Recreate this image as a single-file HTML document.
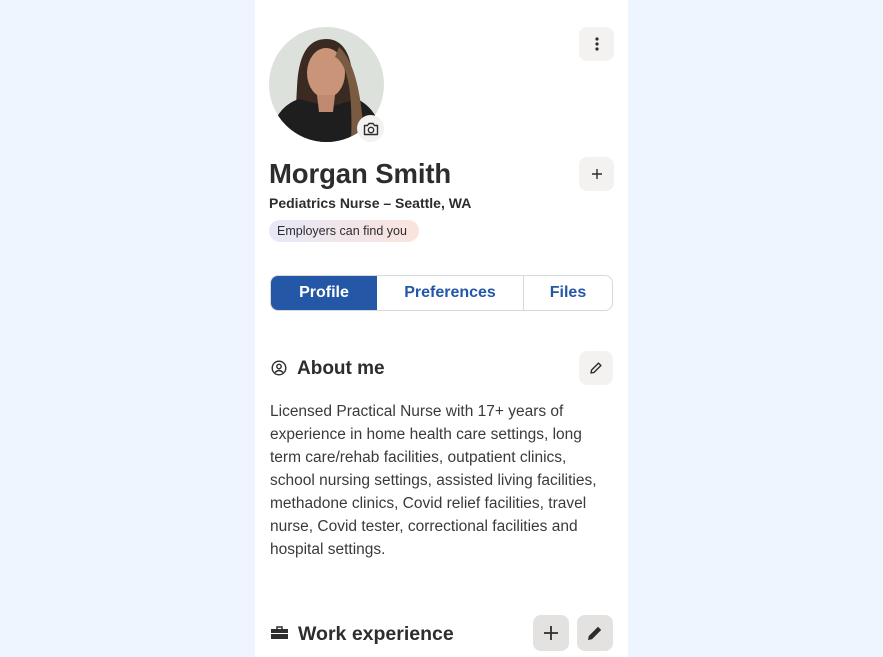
<!DOCTYPE html>
<html><head><style>
*{margin:0;padding:0;box-sizing:border-box}
body{width:883px;height:657px;background:#eef5fe;font-family:"Liberation Sans",sans-serif;color:#2d2d2d;overflow:hidden;position:relative}
.panel{position:absolute;left:255px;top:0;width:373px;height:657px;background:#fff}
.a{position:absolute}
.btn{position:absolute;background:#f3f2f1;border-radius:8px;display:flex;align-items:center;justify-content:center}
</style></head><body>
<div class="panel"></div>
<div class="a" style="left:269px;top:27px;width:115px;height:115px;border-radius:50%;background:#dde1dc;overflow:hidden">
<svg width="115" height="115" viewBox="0 0 115 115">
<path d="M25 115 L28 60 Q30 12 57 12 Q82 12 84 55 L95 115Z" fill="#3a2a22"/>
<path d="M0 115 Q5 80 30 72 L60 80 L88 72 Q110 82 115 115Z" fill="#1e1e1e"/>
<ellipse cx="57" cy="46" rx="19" ry="25" fill="#c99478"/>
<path d="M48 68 L66 68 L64 85 L50 85Z" fill="#c08a70"/>
<path d="M66 30 Q85 40 82 115 L95 115 Q92 40 70 20Z" fill="#7a5a40"/>
</svg></div>
<div class="a" style="left:357px;top:115px;width:27px;height:27px;border-radius:50%;background:#f3f2f1;display:flex;align-items:center;justify-content:center">
<svg width="16" height="14" viewBox="0 0 16 14"><path d="M1.5 3.5h3l1.5-2h4l1.5 2h3v9h-13z" fill="none" stroke="#2d2d2d" stroke-width="1.4" stroke-linejoin="round"/><circle cx="8" cy="8" r="2.7" fill="none" stroke="#2d2d2d" stroke-width="1.4"/></svg></div>
<div class="btn" style="left:579px;top:27px;width:35px;height:34px"><svg width="4" height="14"><circle cx="2" cy="2" r="1.6" fill="#2d2d2d"/><circle cx="2" cy="7" r="1.6" fill="#2d2d2d"/><circle cx="2" cy="12" r="1.6" fill="#2d2d2d"/></svg></div>
<div class="a" style="left:269px;top:158px;font-size:27.5px;font-weight:bold;letter-spacing:-0.1px">Morgan Smith</div>
<div class="btn" style="left:579px;top:157px;width:35px;height:34px"><svg width="12" height="12"><path d="M6 1v10M1 6h10" stroke="#2d2d2d" stroke-width="1.4"/></svg></div>
<div class="a" style="left:269px;top:195px;font-size:14px;font-weight:bold;color:#2d2d2d">Pediatrics Nurse – Seattle, WA</div>
<div class="a" style="left:269px;top:220px;width:150px;height:22px;border-radius:11px;background:linear-gradient(90deg,#e6e8f8,#fbe3dc);font-size:12.5px;line-height:22px;padding-left:8px;color:#2d2d2d">Employers can find you</div>
<div class="a" style="left:270px;top:275px;width:343px;height:36px;border:1.5px solid #d8d8d8;border-radius:8px;overflow:hidden;display:flex;font-size:16px;font-weight:bold;color:#2557a7">
<div style="width:106px;background:#2557a7;color:#fff;display:flex;align-items:center;justify-content:center">Profile</div>
<div style="width:147px;border-right:1.5px solid #d8d8d8;display:flex;align-items:center;justify-content:center">Preferences</div>
<div style="flex:1;display:flex;align-items:center;justify-content:center">Files</div></div>
<svg class="a" style="left:271px;top:360px" width="16" height="16" viewBox="0 0 16 16"><circle cx="8" cy="8" r="6.8" fill="none" stroke="#2d2d2d" stroke-width="1.4"/><circle cx="8" cy="6.5" r="2.2" fill="none" stroke="#2d2d2d" stroke-width="1.4"/><path d="M4 12.5q4-4 8 0" fill="none" stroke="#2d2d2d" stroke-width="1.4"/></svg>
<div class="a" style="left:297px;top:358px;font-size:19px;font-weight:bold">About me</div>
<div class="btn" style="left:579px;top:351px;width:34px;height:34px"><svg width="14" height="14" viewBox="0 0 14 14"><path d="M2 12l.6-3L9.5 2.1l2.4 2.4L5 11.4z" fill="none" stroke="#2d2d2d" stroke-width="1.4" stroke-linejoin="round"/></svg></div>
<div class="a" style="left:270px;top:400px;width:332px;font-size:15.5px;line-height:23px;color:#3a3a3a">Licensed Practical Nurse with 17+ years of experience in home health care settings, long term care/rehab facilities, outpatient clinics, school nursing settings, assisted living facilities, methadone clinics, Covid relief facilities, travel nurse, Covid tester, correctional facilities and hospital settings.</div>
<svg class="a" style="left:271px;top:626px" width="17" height="13" viewBox="0 0 17 13"><path d="M6 3V1h5v2" fill="none" stroke="#2d2d2d" stroke-width="1.5"/><rect x="0" y="3" width="17" height="4" fill="#2d2d2d"/><rect x="0" y="8" width="17" height="5" fill="#2d2d2d"/></svg>
<div class="a" style="left:298px;top:623px;font-size:19.5px;font-weight:bold">Work experience</div>
<div class="btn" style="left:533px;top:615px;width:36px;height:36px;background:#e4e2e0"><svg width="16" height="16"><path d="M8 1v14M1 8h14" stroke="#2d2d2d" stroke-width="1.8"/></svg></div>
<div class="btn" style="left:577px;top:615px;width:36px;height:36px;background:#e4e2e0"><svg width="16" height="16" viewBox="0 0 16 16"><path d="M1 15l.8-4L11 1.8l3.2 3.2L5 14.2z" fill="#2d2d2d"/></svg></div>
</body></html>
